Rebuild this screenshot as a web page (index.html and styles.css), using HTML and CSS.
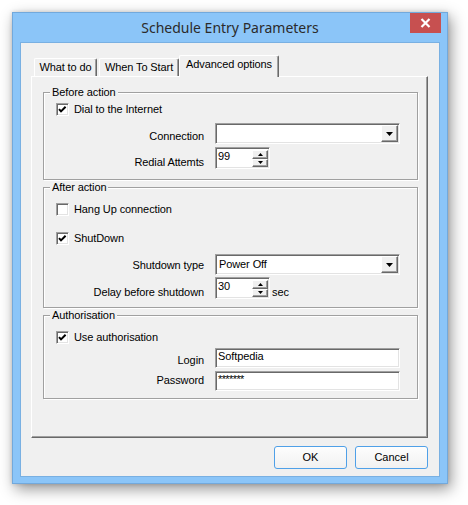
FILE: index.html
```html
<!DOCTYPE html>
<html>
<head>
<meta charset="utf-8">
<title>Schedule Entry Parameters</title>
<link rel="stylesheet" href="styles.css">
</head>
<body>
<div class="window">
  <div class="titlebar">
    <div class="tb-spacer"></div>
    <div class="title">Schedule Entry Parameters</div>
    <div class="tb-right">
      <div class="close">
        <svg width="11" height="10" viewBox="0 0 11 10"><path d="M1.5 1 L9.5 9 M9.5 1 L1.5 9" stroke="#fff" stroke-width="2.2" fill="none"/></svg>
      </div>
    </div>
  </div>
  <div class="client">
    <div class="tabs">
      <div class="tab t1">What to do</div>
      <div class="tab t2">When To Start</div>
      <div class="tab t3 active">Advanced options</div>
    </div>
    <div class="panel">
      <div class="group g1">
        <div class="gtitle">Before action</div>
        <div class="check m4">
          <span class="cb"><svg width="11" height="11" viewBox="0 0 11 11"><polyline points="2,5.2 4,7.4 8.6,2.8" stroke="#000" stroke-width="2" fill="none"/></svg></span>
          <span>Dial to the Internet</span>
        </div>
        <div class="field m7">
          <span class="lbl o7">Connection</span>
          <div class="combo"><span class="val"></span><span class="ddbtn"><svg width="7" height="4" viewBox="0 0 7 4"><path d="M0 0 H7 L3.5 4 Z" fill="#000"/></svg></span></div>
        </div>
        <div class="field m3">
          <span class="lbl o9">Redial Attemts</span>
          <div class="spinwrap">
            <div class="spin"><span class="val">99</span>
              <span class="spinbtns">
                <span class="sb"><svg width="5" height="3" viewBox="0 0 5 3"><path d="M0 3 H5 L2.5 0 Z" fill="#000"/></svg></span>
                <span class="sb"><svg width="5" height="3" viewBox="0 0 5 3"><path d="M0 0 H5 L2.5 3 Z" fill="#000"/></svg></span>
              </span>
            </div>
          </div>
        </div>
      </div>

      <div class="group g2">
        <div class="gtitle">After action</div>
        <div class="check m9">
          <span class="cb"></span>
          <span>Hang Up connection</span>
        </div>
        <div class="check m16">
          <span class="cb"><svg width="11" height="11" viewBox="0 0 11 11"><polyline points="2,5.2 4,7.4 8.6,2.8" stroke="#000" stroke-width="2" fill="none"/></svg></span>
          <span>ShutDown</span>
        </div>
        <div class="field m9">
          <span class="lbl o5">Shutdown type</span>
          <div class="combo"><span class="val">Power Off</span><span class="ddbtn"><svg width="7" height="4" viewBox="0 0 7 4"><path d="M0 0 H7 L3.5 4 Z" fill="#000"/></svg></span></div>
        </div>
        <div class="field m2">
          <span class="lbl o9">Delay before shutdown</span>
          <div class="spinwrap">
            <div class="spin"><span class="val">30</span>
              <span class="spinbtns">
                <span class="sb"><svg width="5" height="3" viewBox="0 0 5 3"><path d="M0 3 H5 L2.5 0 Z" fill="#000"/></svg></span>
                <span class="sb"><svg width="5" height="3" viewBox="0 0 5 3"><path d="M0 0 H5 L2.5 3 Z" fill="#000"/></svg></span>
              </span>
            </div>
            <span class="unit">sec</span>
          </div>
        </div>
      </div>

      <div class="group g3">
        <div class="gtitle">Authorisation</div>
        <div class="check m9">
          <span class="cb"><svg width="11" height="11" viewBox="0 0 11 11"><polyline points="2,5.2 4,7.4 8.6,2.8" stroke="#000" stroke-width="2" fill="none"/></svg></span>
          <span>Use authorisation</span>
        </div>
        <div class="field m4">
          <span class="lbl o6">Login</span>
          <div class="edit">Softpedia</div>
        </div>
        <div class="field m3">
          <span class="lbl o3">Password</span>
          <div class="edit pw">*******</div>
        </div>
      </div>
    </div>
    <div class="buttons">
      <button class="btn">OK</button>
      <button class="btn">Cancel</button>
    </div>
  </div>
</div>
</body>
</html>
```
FILE: styles.css
```css
* { box-sizing: border-box; }
html, body { margin: 0; padding: 0; background: #fff; }
body {
  font-family: "Liberation Sans", Arial, sans-serif;
  font-size: 11px;
  letter-spacing: -0.1px;
  color: #000;
  min-height: 505px;
  padding-top: 12px;
}

.window {
  margin: 0 0 0 12px;
  width: 436px;
  height: 472px;
  background: #8bc5f8;
  border: 1px solid #72a9dc;
  box-shadow: 3px 5px 14px rgba(0,0,0,0.42), 0 0 4px rgba(0,0,0,0.15);
  display: flex;
  flex-direction: column;
}

.titlebar {
  height: 29px;
  display: grid;
  grid-template-columns: 1fr auto 1fr;
  align-items: center;
}
.title {
  font-family: "Noto Sans", "Open Sans", sans-serif;
  font-size: 14px;
  letter-spacing: 0;
  color: #2b2b2b;
  line-height: 20px;
  padding-top: 1px;
  white-space: nowrap;
}
.tb-right {
  display: flex;
  justify-content: flex-end;
  align-self: start;
}
.close {
  width: 31px;
  height: 20px;
  margin-right: 6px;
  background: #c75050;
  display: flex;
  align-items: center;
  justify-content: center;
}

.client {
  margin-left: 7px;
  width: 420px;
  height: 435px;
  background: #f0f0f0;
  border: 1px solid #79b0e2;
  padding: 12px 11px 0 10px;
  display: flex;
  flex-direction: column;
}

.tabs {
  height: 21px;
  display: flex;
  align-items: flex-end;
  padding-left: 3px;
}
.tab {
  height: 18px;
  border: 1px solid #fff;
  border-bottom: none;
  border-right-color: #696969;
  box-shadow: inset -1px 0 0 #a0a0a0;
  border-radius: 2px 2px 0 0;
  padding-top: 2px;
  line-height: 13px;
  text-align: center;
  background: #f0f0f0;
  white-space: nowrap;
}
.t1 { width: 63px; margin-right: 2px; }
.t2 { width: 80px; }
.t3 { width: 100px; }
.tab.active {
  height: 22px;
  margin-bottom: -1px;
  position: relative;
  z-index: 1;
}

.panel {
  width: 397px;
  height: 362px;
  border: 1px solid #fff;
  border-right-color: #696969;
  border-bottom-color: #696969;
  box-shadow: inset -1px -1px 0 #a0a0a0;
  padding: 15px 0 0 11px;
  display: flex;
  flex-direction: column;
}

.group {
  width: 375px;
  border: 1px solid #a0a0a0;
  box-shadow: inset 1px 1px 0 #fff, 1px 1px 0 #fff;
  display: flex;
  flex-direction: column;
}
.g1 { height: 88px; }
.g2 { height: 121px; margin-top: 7px; }
.g3 { height: 84px; margin-top: 7px; }

.gtitle {
  width: fit-content;
  margin: -7px 0 0 6px;
  padding: 0 2px;
  height: 13px;
  line-height: 13px;
  background: #f0f0f0;
  white-space: nowrap;
}

.check {
  display: flex;
  align-items: center;
  height: 13px;
  padding-left: 12px;
  line-height: 13px;
  white-space: nowrap;
}
.cb {
  width: 13px;
  height: 13px;
  margin-right: 5px;
  background: #fff;
  border: 1px solid;
  border-color: #a0a0a0 #fff #fff #a0a0a0;
  box-shadow: inset 1px 1px 0 #696969, inset -1px -1px 0 #e3e3e3;
  display: flex;
}
.cb svg { display: block; }

.m2 { margin-top: 2px; }
.m3 { margin-top: 3px; }
.m4 { margin-top: 4px; }
.m7 { margin-top: 7px; }
.m9 { margin-top: 9px; }
.m16 { margin-top: 16px; }

.field {
  display: grid;
  grid-template-columns: 160px 185px;
  column-gap: 11px;
  align-items: start;
}
.lbl {
  text-align: right;
  line-height: 13px;
  white-space: nowrap;
}
.o3 { padding-top: 3px; }
.o5 { padding-top: 5px; }
.o6 { padding-top: 6px; }
.o7 { padding-top: 7px; }
.o9 { padding-top: 9px; }

.combo, .edit, .spin {
  background: #fff;
  border: 1px solid;
  border-color: #a0a0a0 #fff #fff #a0a0a0;
  box-shadow: inset 1px 1px 0 #696969, inset -1px -1px 0 #e3e3e3;
}
.combo {
  height: 21px;
  display: flex;
  padding: 1px;
}
.combo .val {
  flex: 1;
  padding: 2px 0 0 2px;
  line-height: 13px;
}
.ddbtn {
  width: 17px;
  height: 17px;
  background: #f0f0f0;
  border: 1px solid;
  border-color: #fff #696969 #696969 #fff;
  box-shadow: inset -1px -1px 0 #a0a0a0;
  display: flex;
  align-items: center;
  justify-content: center;
}

.spinwrap {
  display: flex;
  align-items: flex-start;
}
.spin {
  width: 55px;
  height: 22px;
  display: flex;
  padding: 1px;
}
.spin .val {
  flex: 1;
  line-height: 13px;
  padding: 1px 0 0 1px;
}
.spinbtns {
  width: 16px;
  display: flex;
  flex-direction: column;
  margin-top: 1px;
}
.sb {
  height: 9px;
  background: #f0f0f0;
  border: 1px solid;
  border-color: #fff #696969 #696969 #fff;
  box-shadow: inset -1px -1px 0 #a0a0a0;
  display: flex;
  align-items: center;
  justify-content: center;
}
.sb svg { display: block; }
.unit {
  margin-left: 2px;
  padding-top: 9px;
  line-height: 13px;
}

.edit {
  height: 20px;
  padding: 1px 0 0 2px;
  line-height: 13px;
}
.edit.pw {
  letter-spacing: -0.6px;
}

.buttons {
  display: flex;
  justify-content: flex-end;
  gap: 8px;
  margin-top: 8px;
}
.btn {
  width: 73px;
  height: 23px;
  font-family: "Liberation Sans", Arial, sans-serif;
  font-size: 11px;
  color: #000;
  background: linear-gradient(#fdfdfd, #f1f1f1);
  border: 1px solid #4fa0e8;
  border-radius: 3px;
  padding: 0;
  line-height: 13px;
}
```
